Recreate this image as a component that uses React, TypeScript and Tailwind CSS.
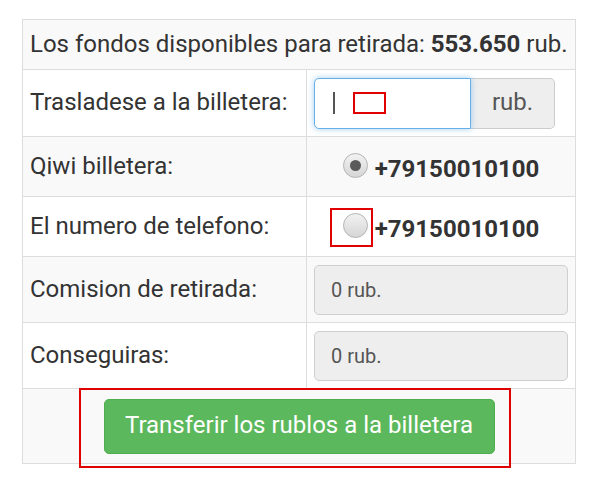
import React from 'react';

const Radio = ({ checked }: { checked?: boolean }) => (
  <span className="relative inline-flex h-[25px] w-[25px] shrink-0 items-center justify-center rounded-full border border-[#b5b5b5] bg-gradient-to-b from-[#f2f2f2] to-[#d6d6d6]">
    {checked && <span className="h-[11px] w-[11px] rounded-full bg-[#5a5a5a]" />}
  </span>
);

const ReadOnlyField = ({ value }: { value: string }) => (
  <div className="flex h-[50px] w-[254px] items-center rounded-[5px] border border-[#cfcfcf] bg-[#eeeeee] pl-[16px] text-[20px] text-[#555]">
    {value}
  </div>
);

export default function App() {
  const cell = 'border border-[#dddddd] px-[7px] align-middle';

  return (
    <div className="min-h-[484px] bg-white pl-[22px] pt-[19px] text-[#333] [font-family:Roboto,'Noto_Sans',sans-serif]">
      <table className="w-[553px] table-fixed border-collapse text-[24px] leading-[1.3]">
        <colgroup>
          <col className="w-[284px]" />
          <col className="w-[269px]" />
        </colgroup>
        <tbody>
          <tr className="h-[50px] bg-[#f9f9f9]">
            <td colSpan={2} className={`${cell} whitespace-nowrap`}>
              Los fondos disponibles para retirada: <b className="font-bold">553.650</b> rub.
            </td>
          </tr>
          <tr className="h-[67px] bg-white">
            <td className={`${cell} whitespace-nowrap`}>Trasladese a la billetera:</td>
            <td className={cell}>
              <div className="flex h-[51px] w-[241px]">
                <div className="relative flex w-[157px] items-center rounded-l-[5px] border border-[#66afe9] bg-white shadow-[0_0_6px_rgba(102,175,233,0.6)]">
                  <span className="ml-[18px] h-[22px] w-[2px] bg-[#555]" />
                  <span className="ml-[18px] h-[22px] w-[33px] border-2 border-[#e00000]" />
                </div>
                <div className="flex flex-1 items-center justify-center rounded-r-[5px] border border-l-0 border-[#cccccc] bg-[#eeeeee] text-[24px] text-[#555]">
                  rub.
                </div>
              </div>
            </td>
          </tr>
          <tr className="h-[60px] bg-[#f9f9f9]">
            <td className={cell}>Qiwi billetera:</td>
            <td className={cell}>
              <div className="flex items-center justify-center gap-[7px] pt-[6px]">
                <span className="relative inline-flex -translate-y-[4px]">
                  <Radio checked />
                </span>
                <span className="font-bold">+79150010100</span>
              </div>
            </td>
          </tr>
          <tr className="h-[60px] bg-white">
            <td className={`${cell} whitespace-nowrap`}>El numero de telefono:</td>
            <td className={cell}>
              <div className="flex items-center justify-center gap-[7px] pt-[6px]">
                <span className="relative inline-flex -translate-y-[4px]">
                  <Radio />
                  <span className="absolute left-[-13px] top-[-5px] h-[39px] w-[43px] border-2 border-[#e00000]" />
                </span>
                <span className="font-bold">+79150010100</span>
              </div>
            </td>
          </tr>
          <tr className="h-[66px] bg-[#f9f9f9]">
            <td className={cell}>Comision de retirada:</td>
            <td className={cell}>
              <ReadOnlyField value="0 rub." />
            </td>
          </tr>
          <tr className="h-[66px] bg-white">
            <td className={cell}>Conseguiras:</td>
            <td className={cell}>
              <ReadOnlyField value="0 rub." />
            </td>
          </tr>
          <tr className="h-[75px] bg-[#f9f9f9]">
            <td colSpan={2} className={`${cell} text-center`}>
              <div className="relative inline-block align-middle">
                <button className="h-[55px] w-[391px] rounded-[5px] border border-[#4cae4c] bg-[#5cb85c] text-[24px] text-white">
                  Transferir los rublos a la billetera
                </button>
                <span className="pointer-events-none absolute left-[-25px] top-[-11px] h-[80px] w-[432px] border-2 border-[#e00000]" />
              </div>
            </td>
          </tr>
        </tbody>
      </table>
    </div>
  );
}
